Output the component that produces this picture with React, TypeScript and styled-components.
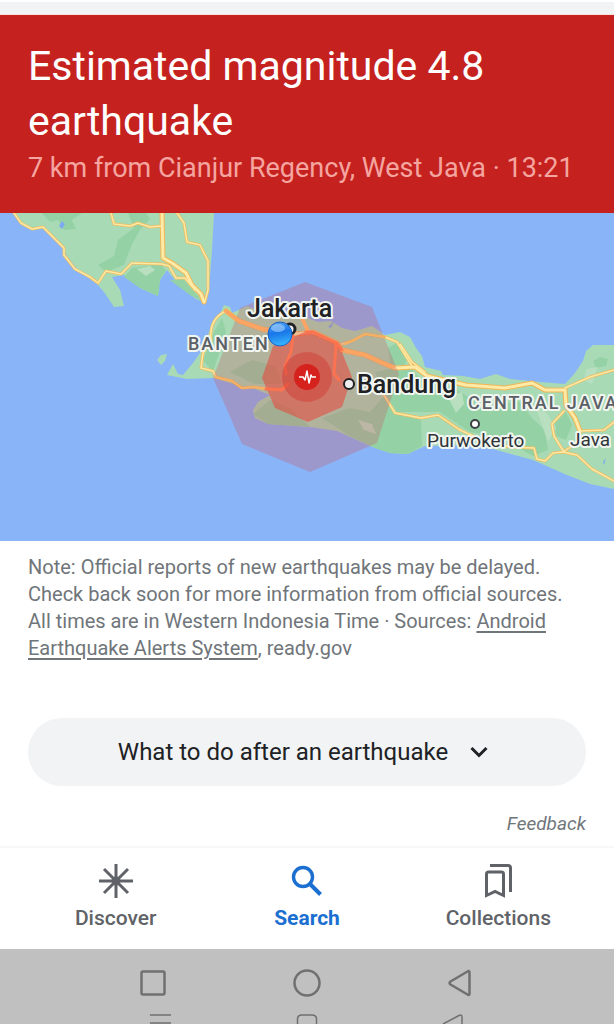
import React from "react";
import styled, { createGlobalStyle } from "styled-components";

const GlobalStyle = createGlobalStyle`
  *, *::before, *::after { box-sizing: border-box; }
  body { margin: 0; background: #fff; font-family: Roboto, "Liberation Sans", sans-serif; }
`;

const Page = styled.div`
  display: flex;
  flex-direction: column;
  min-height: 100vh;
  overflow: hidden;
`;

const TopStrip = styled.div`
  height: 15px;
  background: #f1f3f4;
  border-top: 2px solid #fff;
  border-bottom: 1px solid #fbe0de;
`;

const AlertHeader = styled.header`
  padding: 24px 28px 26px;
  background: #c5221f;
`;

const Title = styled.h1`
  margin: 0;
  max-width: 500px;
  font-size: 41px;
  font-weight: 400;
  line-height: 55px;
  color: #fff;
`;

const Subtitle = styled.p`
  margin: 0;
  font-size: 27px;
  line-height: 38px;
  color: #f5a5a0;
`;

const MapSvg = styled.svg`
  display: block;
  width: 100%;
  height: auto;
`;

const MapLabel = styled.text<{ $size: number; $weight?: number; $color?: string; $track?: number }>`
  font-family: Roboto, "Liberation Sans", sans-serif;
  font-size: ${(p) => p.$size}px;
  font-weight: ${(p) => p.$weight ?? 400};
  letter-spacing: ${(p) => p.$track ?? 0}px;
  fill: ${(p) => p.$color ?? "#202124"};
  stroke: #f1f6f1;
  stroke-width: 4px;
  stroke-linejoin: round;
  paint-order: stroke;
`;

const Content = styled.main`
  display: flex;
  flex-direction: column;
  flex: 1;
  padding: 13px 28px 10px;
`;

const Note = styled.p`
  margin: 0;
  font-size: 20px;
  line-height: 27px;
  color: #70757a;
`;

const SourceLink = styled.a`
  color: inherit;
  text-decoration: underline;
  text-underline-offset: 3px;
`;

const ExpandButton = styled.button`
  display: flex;
  align-items: center;
  justify-content: center;
  gap: 22px;
  width: 100%;
  height: 68px;
  margin-top: 56px;
  padding: 0 8px 0 0;
  border: 0;
  border-radius: 34px;
  background: #f1f3f4;
  color: #202124;
  font: 400 24px/32px Roboto, "Liberation Sans", sans-serif;
`;

const Feedback = styled.a`
  align-self: flex-end;
  margin-top: 26px;
  font-size: 19px;
  line-height: 24px;
  font-style: italic;
  color: #70757a;
  text-decoration: none;
`;

const TabBar = styled.nav`
  display: grid;
  grid-template-columns: repeat(3, 1fr);
  height: 103px;
  padding: 15px 20px 0;
  border-top: 2px solid #f7f8f8;
`;

const Tab = styled.a<{ $active?: boolean }>`
  display: flex;
  flex-direction: column;
  align-items: center;
  gap: 5px;
  font-size: 21px;
  font-weight: ${(p) => (p.$active ? 700 : 500)};
  line-height: 28px;
  text-decoration: none;
  color: ${(p) => (p.$active ? "#1a6fd0" : "#5f6368")};
`;

const SystemBar = styled.div`
  height: 75px;
  padding: 17px 76px 0;
  overflow: hidden;
  background: #c0c0c0;
`;

const SystemRow = styled.div`
  display: grid;
  grid-template-columns: repeat(3, 1fr);
  justify-items: center;
`;

const SystemButton = styled.button`
  display: flex;
  padding: 0;
  border: 0;
  background: none;
  color: #707070;
`;

const EdgeRow = styled.div`
  display: flex;
  justify-content: space-between;
  padding: 13px 74px 0;
  color: #707070;
`;

const roads = [
  "M14 213 L21 223 L32 229 L43 227 L55 239 L64 248 L64 255 L75 269 L90 277 L98 283 L106 271 L121 274 L132 263 L161 264",
  "M111 213 L114 224 L130 226 L138 223 L150 227 L161 226",
  "M177 213 L184 223 L187 242 L200 245 L208 261 L208 290 L205 301",
  "M162 264 L169 266 L176 278 L185 278 L195 290",
  "M224 312 Q209 320 211 340 L203 353 L201 368 L213 371 L216 377 L232 381 L242 388 L254 387 L270 389 L282 389 L288 384",
  "M342 344 L352 341 L365 334 L385 337 L397 342 L405 355 L412 366",
  "M384 395 L395 413 L421 418 L438 415 L460 430 L480 439 L510 447 L534 448 L537 459 L545 461 L553 453 L563 452 L577 455 L592 469 L614 481",
  "M400 344 L412 362 L425 372",
  "M565 388 L590 377 L614 370",
  "M564 411 L552 424 L554 436 L564 452",
  "M563 452 L578 442 L580 431 L604 430 L614 422",
];

const mainRoads = [
  "M162 213 L163 258 L172 263 L186 273 L192 285 L201 294 L204 302",
  "M226 311 L239 321 L262 329 L295 334 L313 332 L337 343 L342 350 L365 355 L385 364 L395 368 L415 367 L427 376 L466 385 L505 388 L532 383 L545 390 L565 390 L566 405 L575 418 L580 431",
];

function EarthquakeMap() {
  return (
    <MapSvg viewBox="0 213 614 328" role="img" aria-label="Map of the area around the earthquake">
      <rect x="0" y="213" width="614" height="328" fill="#8ab4f8" />
      <g fill="#a8dab5">
        <path d="M13 213 L20 224 L32 230 L43 228 L62 245 L67 257 L80 272 L97 284 L104 292 L114 307 L124 306 L120 290 L112 277 L124 275 L140 288 L158 296 L160 280 L167 270 L178 284 L196 299 L206 303 L209 290 L212 250 L214 213 Z" />
        <path d="M157 360 L161 355 L167 354 L165 361 L161 365 Z" />
        <path d="M167 375 L173 364 L178 374 L183 375 L193 363 L200 353 L210 330 L220 314 L224 305 L230 307 L232 313 L247 306 L270 316 L300 315 L318 322 L331 321 L342 328 L355 331 L372 326 L385 335 L400 332 L410 337 L416 348 L422 356 L425 367 L441 371 L443 375 L463 376 L480 379 L496 374 L510 379 L540 382 L565 384 L575 373 L583 361 L586 351 L593 345 L614 345 L614 489 L590 484 L567 475 L533 460 L493 449 L470 445 L425 446 L408 454 L390 453 L375 448 L337 431 L310 427 L268 424 L255 418 L253 410 L258 402 L270 395 L255 389 L240 386 L213 378 L187 379 Z" />
      </g>
      <g fill="#94d2a5">
        <path d="M42 213 L50 222 L58 220 L64 230 L76 229 L72 220 L82 213 Z" />
        <path d="M128 213 L134 228 L118 240 L114 256 L98 265 L106 272 L124 265 L132 244 L140 230 L150 219 L146 213 Z" />
        <path d="M132 268 L160 264 L166 270 L160 280 L158 296 L140 288 L124 277 Z" />
        <path d="M170 280 L183 279 L202 301 L190 295 Z" />
        <path d="M203 360 L214 332 L222 318 L226 332 L220 350 L213 372 Z" />
        <path d="M230 372 L252 360 L276 366 L282 384 L254 384 Z" />
        <path d="M253 414 L270 400 L290 408 L310 427 L268 424 Z" />
        <path d="M384 396 L397 414 L421 418 L422 446 L408 454 L390 453 L375 448 L350 436 L322 418 L350 408 L370 412 Z" />
        <path d="M375 372 L390 369 L412 370 L425 384 L455 388 L480 405 L520 402 L532 418 L545 430 L548 450 L533 456 L500 438 L470 432 L440 412 L397 412 L384 392 Z" />
        <path d="M388 348 L398 342 L408 358 L404 366 L390 364 Z" />
        <path d="M555 423 L566 412 L572 425 L566 440 L556 436 Z" />
        <path d="M593 361 L600 357 L608 359 L606 366 L596 368 Z" />
      </g>
      <g fill="#b8dfc0">
        <path d="M137 269 L150 266 L155 270 L146 276 Z" />
        <path d="M536 408 L546 412 L556 428 L548 442 L542 425 Z" />
        <path d="M448 397 L462 392 L464 404 L456 413 Z" />
        <path d="M586 369 L598 367 L592 384 L584 380 Z" />
        <path d="M358 420 L372 424 L376 434 L364 430 Z" />
      </g>
      <path d="M59 226 L62 221 L65 224 L62 229 Z M603 462 L606 458 L604 465 Z M328 327 L334 321 L331 328 Z" fill="#7daaf0" />
      <g fill="none" strokeLinejoin="round" strokeLinecap="round">
        {roads.map((d) => (
          <path key={d} d={d} stroke="#eebd62" strokeWidth="3" />
        ))}
        {mainRoads.map((d) => (
          <path key={d} d={d} stroke="#f2b656" strokeWidth="5" />
        ))}
        {roads.map((d) => (
          <path key={d} d={d} stroke="#fce9a4" strokeWidth="1.5" />
        ))}
        {mainRoads.map((d) => (
          <path key={d} d={d} stroke="#fdeaa6" strokeWidth="3" />
        ))}
      </g>
      <path d="M305 282 L372 307 L399 374 L377 443 L310 472 L242 444 L213 378 L240 308 Z" fill="#c85a66" fillOpacity="0.3" />
      <path d="M307 331 L339 345 L352 377 L342 407 L308 422 L275 408 L262 378 L273 346 Z" fill="#f03a30" fillOpacity="0.5" />
      <g fill="none" strokeLinejoin="round" strokeLinecap="round">
        <path d="M226 311 L239 321 L262 329 L285 333 M302 318 L308 331 M342 350 L365 355 L385 364 L393 367" stroke="#fba565" strokeWidth="4" />
        <path d="M215 377 L232 381 L242 388 L254 387 L264 389 M345 344 L352 341 L365 334 L385 337" stroke="#f5b163" strokeWidth="2" />
        <path d="M293 336 L291 352 L285 366 L286 374 M306 332 L313 332 L337 343 L342 350 M336 345 L334 374 L339 380 M266 389 L282 390 L288 384" stroke="#fb7350" strokeWidth="3" />
      </g>
      <circle cx="307" cy="377" r="25" fill="#d0302a" fillOpacity="0.4" />
      <circle cx="307" cy="377" r="13" fill="#d5221d" />
      <path d="M299 377 H303 L305 380 L307 371 L309 383 L311 375 L312 377 H316" fill="none" stroke="#fff" strokeWidth="1.5" strokeLinejoin="round" />

      <circle cx="349" cy="384" r="5" fill="#eee" stroke="#202124" strokeWidth="2" />
      <circle cx="475" cy="424" r="4" fill="#fff" stroke="#3c4043" strokeWidth="2" />
      <circle cx="290" cy="329" r="5" fill="#eee" stroke="#202124" strokeWidth="3" />

      <MapLabel x="188" y="350" $size={18} $weight={500} $color="#5a6066" $track={2}>BANTEN</MapLabel>
      <MapLabel x="468" y="409" $size={18} $weight={500} $color="#5a6066" $track={2}>CENTRAL JAVA</MapLabel>
      <MapLabel x="247" y="317" $size={25} $weight={500}>Jakarta</MapLabel>
      <MapLabel x="357" y="393" $size={25} $weight={500}>Bandung</MapLabel>
      <MapLabel x="427" y="447" $size={19} $color="#303438">Purwokerto</MapLabel>
      <MapLabel x="570" y="446" $size={19} $color="#303438">Java</MapLabel>

      <defs>
        <linearGradient id="location" x1="0.3" y1="0" x2="0.5" y2="1">
          <stop offset="0" stopColor="#55a8f5" />
          <stop offset="0.45" stopColor="#1976e8" />
          <stop offset="1" stopColor="#38b6ff" />
        </linearGradient>
      </defs>
      <circle cx="280" cy="334" r="12" fill="url(#location)" stroke="#1e62c0" strokeWidth="1" />
      <ellipse cx="278" cy="328" rx="7" ry="4" fill="#a9d2fb" fillOpacity="0.6" />
    </MapSvg>
  );
}

function DiscoverIcon() {
  return (
    <svg width="36" height="36" viewBox="0 0 36 36" fill="none" stroke="currentColor" strokeWidth="3" aria-hidden="true">
      <path d="M18 1 V35 M1 18 H35 M6 6 L30 30 M30 6 L6 30" />
      <circle cx="18" cy="18" r="3" fill="currentColor" />
    </svg>
  );
}

function SearchIcon() {
  return (
    <svg width="36" height="36" viewBox="0 0 36 36" fill="none" stroke="currentColor" aria-hidden="true">
      <circle cx="14" cy="14" r="9.5" strokeWidth="3.4" />
      <path d="M20.5 20.5 L31.5 31.5" strokeWidth="4" />
    </svg>
  );
}

function CollectionsIcon() {
  return (
    <svg width="36" height="36" viewBox="0 0 36 36" fill="none" stroke="currentColor" strokeWidth="3" aria-hidden="true">
      <path d="M6.5 32.5 V11 Q6.5 9 8.5 9 H21.5 Q23.5 9 23.5 11 V32.5 L15 28.5 Z" />
      <path d="M10 2.5 H28 Q30.500 2.500 30.500 5 V29" />
    </svg>
  );
}

export default function App() {
  return (
    <>
      <GlobalStyle />
      <Page>
        <TopStrip />
        <AlertHeader>
          <Title>Estimated magnitude 4.8 earthquake</Title>
          <Subtitle>7 km from Cianjur Regency, West Java · 13:21</Subtitle>
        </AlertHeader>
        <EarthquakeMap />
        <Content>
          <Note>
            Note: Official reports of new earthquakes may be delayed. Check back soon for more information from
            official sources. All times are in Western Indonesia Time · Sources:{" "}
            <SourceLink href="#sources">Android Earthquake Alerts System</SourceLink>, ready.gov
          </Note>
          <ExpandButton type="button">
            What to do after an earthquake
            <svg width="18" height="12" viewBox="0 0 18 12" fill="none" stroke="currentColor" strokeWidth="3" aria-hidden="true">
              <path d="M1.5 2 L9 9.5 L16.5 2" />
            </svg>
          </ExpandButton>
          <Feedback href="#feedback">Feedback</Feedback>
        </Content>
        <TabBar>
          <Tab href="#discover">
            <DiscoverIcon />
            Discover
          </Tab>
          <Tab href="#search" $active aria-current="page">
            <SearchIcon />
            Search
          </Tab>
          <Tab href="#collections">
            <CollectionsIcon />
            Collections
          </Tab>
        </TabBar>
        <SystemBar>
          <SystemRow>
            <SystemButton type="button" aria-label="Recent apps">
              <svg width="34" height="34" viewBox="0 0 34 34" fill="none" stroke="currentColor" strokeWidth="2.5">
                <rect x="5.500" y="5.500" width="23" height="23" rx="1.5" />
              </svg>
            </SystemButton>
            <SystemButton type="button" aria-label="Home">
              <svg width="34" height="34" viewBox="0 0 34 34" fill="none" stroke="currentColor" strokeWidth="2.5">
                <circle cx="17" cy="17" r="12.5" />
              </svg>
            </SystemButton>
            <SystemButton type="button" aria-label="Back">
              <svg width="34" height="34" viewBox="0 0 34 34" fill="none" stroke="currentColor" strokeWidth="2.5" strokeLinejoin="round">
                <path d="M23.500 5.500 Q25.500 4 25.500 6.500 V27.500 Q25.500 30 23.500 28.500 L6.500 18.500 Q4.500 17 6.500 15.500 Z" />
              </svg>
            </SystemButton>
          </SystemRow>
          <EdgeRow aria-hidden="true">
            <svg width="22" height="11" viewBox="0 0 22 11" stroke="currentColor" strokeWidth="1.5">
              <path d="M0 2 H21 M0 10 H21" />
            </svg>
            <svg width="22" height="11" viewBox="0 0 22 11" fill="none" stroke="currentColor" strokeWidth="1.5">
              <path d="M1.500 11 V6 Q1.500 2 6 2 H16 Q20.500 2 20.500 6 V11" />
            </svg>
            <svg width="22" height="11" viewBox="0 0 22 11" fill="none" stroke="currentColor" strokeWidth="1.5">
              <path d="M1 11 L17 2.500 Q20 1 20 4 V11" />
            </svg>
          </EdgeRow>
        </SystemBar>
      </Page>
    </>
  );
}
